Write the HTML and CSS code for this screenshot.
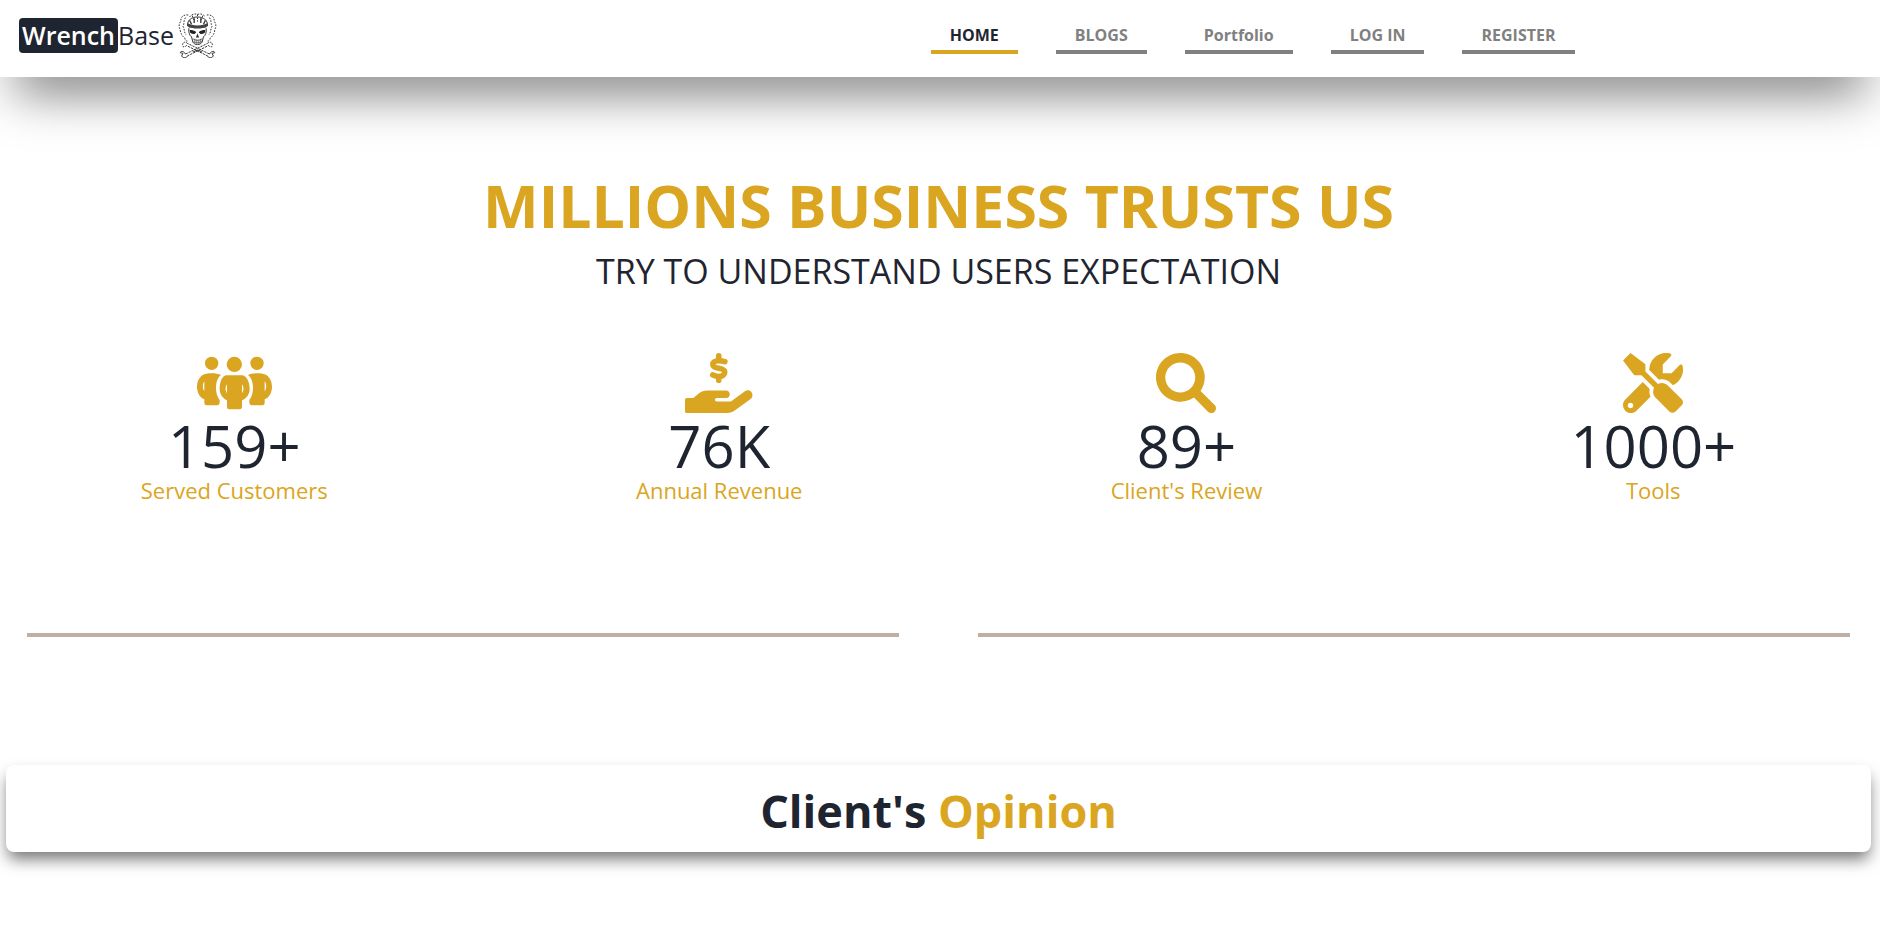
FILE: index.html
```html
<!DOCTYPE html>
<html lang="en">
<head>
<meta charset="utf-8">
<meta name="viewport" content="width=device-width, initial-scale=1">
<title>WrenchBase</title>
<link rel="stylesheet" href="styles.css">
</head>
<body>
<header class="navbar">
  <a class="brand" href="#">
    <span class="brand-badge">Wrench</span><span class="brand-rest">Base</span>
    <svg class="brand-logo" viewBox="0 0 116 136" fill="none" stroke="#333" aria-hidden="true">
      <g stroke-width="3" stroke-dasharray="5 4">
        <path d="M30 6C14 4 6 14 8 24C2 32 0 42 6 50C6 62 12 70 20 76C20 84 26 86 30 84"/>
        <path d="M86 6C102 4 110 14 108 24C114 32 116 42 110 50C110 62 104 70 96 76C96 84 90 86 86 84"/>
        <path d="M22 14C14 24 20 30 14 40C20 50 16 58 24 66M94 14C102 24 96 30 102 40C96 50 100 58 92 66"/>
        <path d="M34 12C42 2 50 2 58 4C66 2 74 2 82 12M42 8L48 24M74 8L68 24M58 4V26"/>
      </g>
      <path d="M28 40C26 20 42 12 58 12C74 12 90 20 88 40" stroke-width="3"/>
      <path d="M28 30C40 40 76 40 88 30L86 42C74 48 42 48 30 42Z" fill="#444" stroke="none"/>
      <path d="M34 22L40 34M82 22L76 34M48 16V30M68 16V30" stroke-width="4"/>
      <path d="M34 52C42 50 50 54 54 58C50 66 40 64 36 60ZM82 52C74 50 66 54 62 58C66 66 76 64 80 60Z" fill="#222" stroke="none"/>
      <path d="M58 62L53 74H63Z" fill="#333" stroke="none"/>
      <path d="M32 46C30 58 34 68 40 72L44 88C50 98 66 98 72 88L76 72C82 68 86 58 84 46" stroke-width="3"/>
      <path d="M44 78C52 84 64 84 72 78M46 86C54 92 62 92 70 86M50 78V90M56 80V93M62 80V93M68 78V90" stroke-width="2"/>
      <g stroke-width="3">
        <path d="M22 124L88 92M27 130L92 98M94 124L28 92M89 130L24 98" stroke-dasharray="7 3"/>
        <path d="M22 124C14 112 6 116 6 120L14 122L10 130C16 138 26 136 27 130"/>
        <path d="M94 124C102 112 110 116 110 120L102 122L106 130C100 138 90 136 89 130"/>
        <path d="M28 92C20 84 10 90 14 100C16 106 22 102 24 98M88 92C96 84 106 90 102 100C100 106 94 102 92 98" stroke-dasharray="5 3"/>
        <path d="M44 118L58 112L72 118"/>
      </g>
    </svg>
  </a>
  <nav class="menu" aria-label="Main">
    <a class="menu-link menu-link-active" href="#">HOME</a>
    <a class="menu-link" href="#">BLOGS</a>
    <a class="menu-link" href="#">Portfolio</a>
    <a class="menu-link" href="#">LOG IN</a>
    <a class="menu-link" href="#">REGISTER</a>
  </nav>
</header>
<main>
  <section class="summary">
    <h1 class="summary-title">MILLIONS BUSINESS TRUSTS US</h1>
    <p class="summary-text">TRY TO UNDERSTAND USERS EXPECTATION</p>
    <div class="stats">
      <div class="stat">
        <svg class="stat-icon" viewBox="0 0 225 180" fill="currentColor" fill-rule="evenodd" aria-hidden="true">
          <circle cx="44" cy="31" r="20"/><circle cx="112" cy="34" r="23"/><circle cx="180" cy="31" r="20"/>
          <path d="M90 67H134C150 67 158 90 158 108C158 122 150 136 135 142V162Q135 169 128 169H97Q90 169 90 162V142C76 136 68 122 68 108C68 90 74 67 90 67ZM90 94C84 102 84 113 90 121ZM135 94V121C141 113 141 102 135 94Z"/>
          <path id="side" d="M28 62C45 59 62 61 72 66C60 76 57 90 57 106C57 120 61 132 68 141V150Q67 157 60 157H29Q22 157 22 150V139C8 133 0 118 0 101C0 80 12 64 28 62ZM22 85C16 93 16 107 22 115Z"/>
          <use href="#side" transform="matrix(-1 0 0 1 225 0)"/>
        </svg>
        <span class="stat-value">159+</span>
        <span class="stat-label">Served Customers</span>
      </div>
      <div class="stat">
        <svg class="stat-icon" viewBox="0 0 576 512" fill="currentColor" aria-hidden="true">
          <path d="M340 74C325 69 308 66 290 66C256 66 238 78 238 98C238 146 339 114 339 164C339 188 318 200 288 200C268 200 252 192 237 187M288 24V60M288 205V232" fill="none" stroke="currentColor" stroke-width="48" stroke-linecap="round" stroke-linejoin="round"/>
          <path d="M559.7 392.2l-135.1 99.51C406.9 504.8 385 512 362.1 512H15.1c-8.749 0-15.1-7.246-15.1-15.99l0-95.99c0-8.748 7.25-16.02 15.1-16.02l55.37 .0238l46.5-37.74c20.1-16.1 47.12-26.25 74.12-26.25h159.1c19.5 0 34.87 17.37 31.62 37.37c-2.625 15.75-17.37 26.62-33.37 26.62H271.1c-8.749 0-15.1 7.249-15.1 15.1s7.25 15.1 15.1 15.1h120.6l119.7-88.17c17.8-13.19 42.81-9.342 55.93 8.467C581.3 354.1 577.5 379.1 559.7 392.2z"/>
        </svg>
        <span class="stat-value">76K</span>
        <span class="stat-label">Annual Revenue</span>
      </div>
      <div class="stat">
        <svg class="stat-icon" viewBox="0 0 512 512" fill="currentColor" aria-hidden="true">
          <path d="M500.3 443.7l-119.7-119.7c27.22-40.41 40.65-90.9 33.46-144.7C401.8 87.79 326.8 13.32 235.2 1.723C99.01-15.51-15.51 99.01 1.724 235.2c11.6 91.64 86.08 166.7 177.6 178.9c53.8 7.189 104.3-6.236 144.7-33.46l119.7 119.7c15.62 15.62 40.95 15.62 56.57 0C515.9 484.7 515.9 459.3 500.3 443.7zM79.1 208c0-70.58 57.42-128 128-128s128 57.42 128 128c0 70.58-57.42 128-128 128S79.1 278.6 79.1 208z"/>
        </svg>
        <span class="stat-value">89+</span>
        <span class="stat-label">Client's Review</span>
      </div>
      <div class="stat">
        <svg class="stat-icon" viewBox="0 0 512 512" fill="currentColor" aria-hidden="true">
          <path d="M331.8 224.1c28.29 0 54.88 10.99 74.86 30.97l19.59 19.59c40.01-17.74 71.25-53.3 81.62-96.65c5.725-23.92 5.34-47.08 .2148-68.4c-2.613-10.88-16.43-14.51-24.34-6.604l-68.9 68.9h-75.6V97.2l68.9-68.9c7.912-7.912 4.275-21.73-6.604-24.34c-21.32-5.125-44.48-5.51-68.4 .2148c-55.3 13.23-98.39 60.22-107.2 116.4C224.5 128.9 224.2 137 224.3 145l82.78 82.86C315.2 225.1 323.5 224.1 331.8 224.1zM384 278.6c-23.16-23.16-57.57-27.57-85.39-13.9L191.1 158L191.1 95.99l-127.1-95.99L0 63.1l96 127.1l62.04 .0077l106.7 106.6c-13.67 27.82-9.251 62.23 13.91 85.39l117 117.1c14.62 14.5 38.21 14.5 52.71-.0016l52.75-52.75c14.5-14.5 14.5-38.08-.0016-52.71L384 278.6zM227.9 307L168.7 247.9l-148.9 148.9c-26.37 26.37-26.37 69.08 0 95.45C32.96 505.4 50.21 512 67.5 512s34.54-6.592 47.72-19.78l119.1-119.1C225.5 352.3 222.6 329.4 227.9 307zM64 472c-13.25 0-24-10.75-24-24c0-13.26 10.75-24 24-24S88 434.7 88 448C88 461.3 77.25 472 64 472z"/>
        </svg>
        <span class="stat-value">1000+</span>
        <span class="stat-label">Tools</span>
      </div>
    </div>
  </section>
  <div class="rules">
    <hr class="rule">
    <hr class="rule">
  </div>
  <section class="opinion">
    <h2 class="opinion-title">Client's <span class="accent">Opinion</span></h2>
  </section>
</main>
</body>
</html>
```
FILE: styles.css
```css
* {
  box-sizing: border-box;
}

body {
  margin: 0;
  background: #fff;
  color: #1f2530;
  font-family: "Segoe UI", "Open Sans", "Noto Sans", sans-serif;
}

.navbar {
  display: flex;
  align-items: flex-start;
  justify-content: space-between;
  padding: 13px 16.25% 19px 19px;
  background: #fff;
  box-shadow: 0 30px 50px -15px rgba(0, 0, 0, 0.55);
}

.brand {
  display: flex;
  align-items: center;
  color: inherit;
  font-size: 25px;
  line-height: 35px;
  text-decoration: none;
}

.brand-badge {
  padding: 0 3px;
  border-radius: 4px;
  background: #1f2530;
  color: #fff;
  font-weight: 600;
}

.brand-rest {
  font-weight: 500;
}

.brand-logo {
  width: 39px;
  height: 45px;
  margin-left: 4px;
}

.menu {
  display: flex;
  gap: 38px;
  padding-top: 9px;
}

.menu-link {
  padding: 1px 19px 3px;
  border-bottom: 4px solid #808080;
  color: #808080;
  font-size: 16px;
  font-weight: 700;
  line-height: 24px;
  text-decoration: none;
}

.menu-link-active {
  border-color: #daa520;
  color: #1f2530;
}

.summary {
  padding: 90px 3px 0 0;
  text-align: center;
}

.summary-title {
  margin: 0;
  color: #daa520;
  font-size: 59px;
  font-weight: 700;
  line-height: 76px;
}

.summary-text {
  margin: 2px 0 0;
  font-size: 34px;
  line-height: 52px;
}

.stats {
  display: flex;
  justify-content: space-between;
  padding: 56px 7.5% 0;
}

.stat {
  display: flex;
  flex-direction: column;
  align-items: center;
}

.stat-icon {
  height: 60px;
  color: #daa520;
}

.stat-value {
  font-size: 58px;
  line-height: 66px;
}

.stat-label {
  color: #daa520;
  font-size: 22px;
  line-height: 22px;
}

.rules {
  display: flex;
  gap: 79px;
  padding: 132px 30px 128px 27px;
}

.rule {
  flex: 1;
  margin: 0;
  border: 0;
  border-top: 4px solid #bfb0a6;
}

.opinion {
  margin: 0 9px 82px 6px;
  padding: 16px 0 12px;
  border-radius: 8px;
  background: #fff;
  box-shadow: 0 9px 16px -2px rgba(0, 0, 0, 0.55);
  text-align: center;
}

.opinion-title {
  margin: 0;
  font-size: 45px;
  font-weight: 700;
  line-height: 59px;
}

.accent {
  color: #daa520;
}
```
